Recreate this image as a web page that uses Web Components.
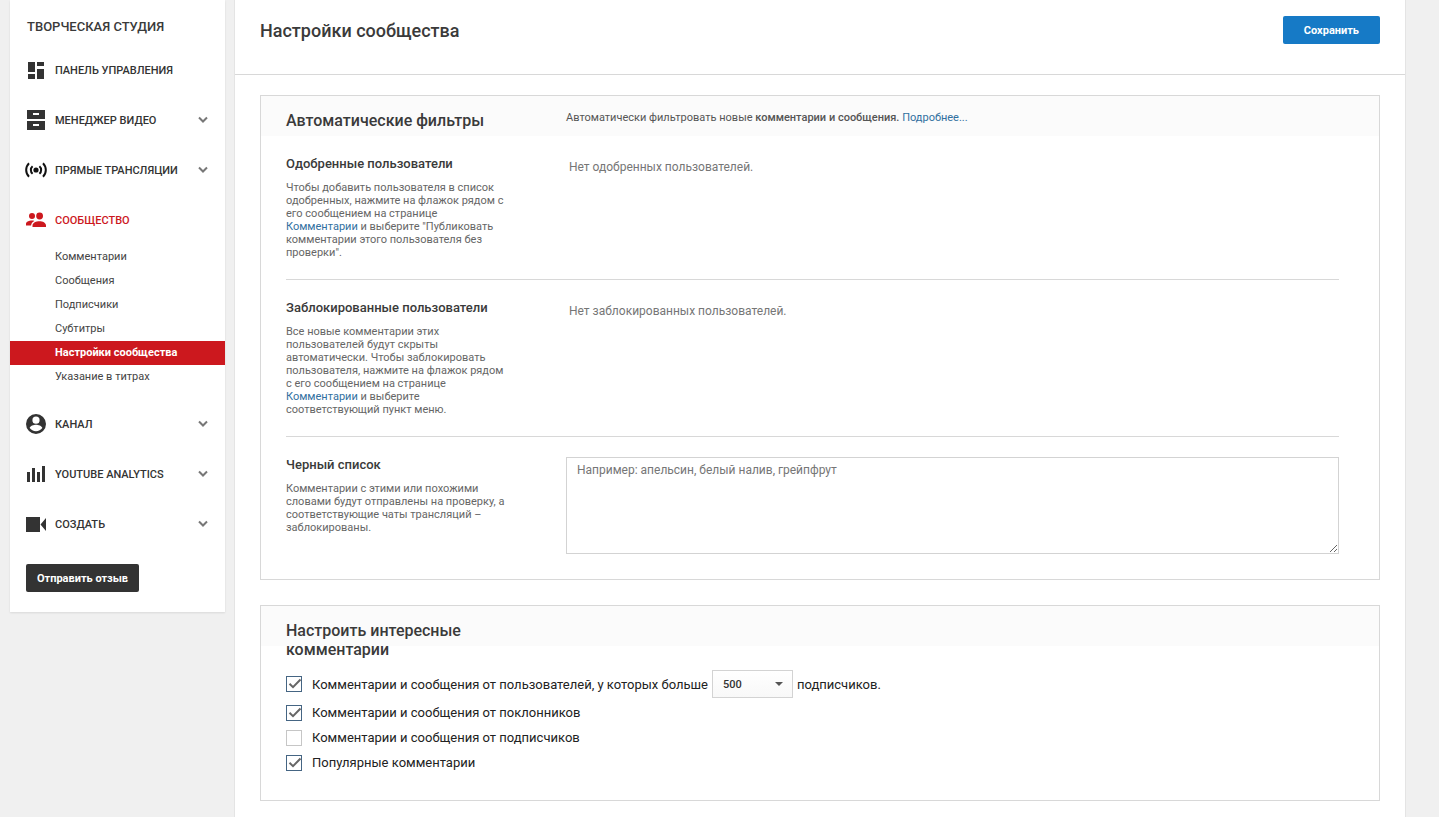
<!DOCTYPE html>
<html lang="ru">
<head>
<meta charset="utf-8">
<meta name="viewport" content="width=device-width, initial-scale=1">
<title>Настройки сообщества</title>
<style>
    body {
        margin: 0;
        background: #f0f0f0;
        color: #3a3a3a;
        font-family: Roboto, "Liberation Sans", sans-serif;
        font-size: 11px;
    }
</style>
</head>
<body>
<studio-page></studio-page>

<script>
// иконки меню, все в сетке 24x24
const ICONS = {
    dashboard: '<path d="M4 4h7v10H4zM4 16h7v5H4zM13 4h7v4h-7zM13 11h7v10h-7z"/>',
    videos: '<path fill-rule="evenodd" d="M3 2h18v9H3zM9 5v2h6V5zM3 13h18v9H3zM9 16v2h6v-2z"/>',
    live: '<g fill="none" stroke="#111" stroke-width="2"><path d="M8.6 8.2a5 5 0 0 0 0 7.6M15.4 8.2a5 5 0 0 1 0 7.6M5 5.2a9.6 9.6 0 0 0 0 13.6M19 5.2a9.6 9.6 0 0 1 0 13.6"/></g><circle cx="12" cy="12" r="2.6" fill="#111"/>',
    community: '<circle cx="8" cy="8" r="3"/><circle cx="15.600" cy="8" r="3.400"/><path d="M2 17.500v-1.500c0-2.200 3-3.400 6-3.400.9 0 1.700.1 2.500.3-2 1-3.200 2.300-3.400 4.600zM8.500 19v-1.600c0-2.700 3.600-4.200 6.900-4.200s6.600 1.500 6.600 4.200V19z"/>',
    channel: '<path fill-rule="evenodd" d="M12 2a10 10 0 1 0 0 20 10 10 0 0 0 0-20zm0 2.600a3.600 3.600 0 1 1 0 7.200 3.600 3.600 0 0 1 0-7.200zM12 19.300c-2.600 0-4.900-1.200-6.300-3.200.2-2.100 4.200-3.300 6.300-3.300s6.100 1.200 6.300 3.300c-1.400 2-3.700 3.200-6.300 3.200z"/>',
    analytics: '<path d="M3 10h3v10H3zM8 6h3v14H8zM13 10h3v10h-3zM18 4h3v16h-3z"/>',
    create: '<path d="M2 5h14v15H2zM16.500 12.500 22 6v13z"/>'
};

// пункт бокового меню
class NavItem extends HTMLElement {
    constructor() {
        super();
        this.attachShadow({mode: 'open'});
    }

    connectedCallback() {
        this.render();
    }

    render() {
        const icon = this.getAttribute('icon');
        const chevron = this.hasAttribute('expandable')
            ? '<svg class="chevron" width="10" height="8" viewBox="0 0 10 8"><path d="M1 1.500 5 5.500 9 1.500" fill="none" stroke="#777" stroke-width="2"/></svg>'
            : '';

        this.shadowRoot.innerHTML = `
            <style>
                :host {
                    display: block;
                    color: #333;
                }

                :host([active]) {
                    color: #cc181e;
                }

                a {
                    display: flex;
                    align-items: center;
                    height: 50px;
                    padding: 0 17px 0 14px;
                    color: inherit;
                    font-weight: 500;
                    text-decoration: none;
                    text-transform: uppercase;
                }

                .icon {
                    margin-right: 7px;
                    fill: currentColor;
                }

                .text {
                    flex: 1;
                    white-space: nowrap;
                }
            </style>
            <a href="#">
                <svg class="icon" width="24" height="24" viewBox="0 0 24 24">${ICONS[icon]}</svg>
                <span class="text"><slot></slot></span>
                ${chevron}
            </a>
        `;
    }
}
customElements.define('nav-item', NavItem);

// вложенный пункт меню
class NavSubitem extends HTMLElement {
    constructor() {
        super();
        this.attachShadow({mode: 'open'});
    }

    connectedCallback() {
        this.shadowRoot.innerHTML = `
            <style>
                :host {
                    display: block;
                }

                a {
                    display: block;
                    padding-left: 45px;
                    color: #444;
                    line-height: 24px;
                    text-decoration: none;
                }

                :host([selected]) a {
                    background: #cc181e;
                    color: #fff;
                    font-weight: 700;
                }
            </style>
            <a href="#"><slot></slot></a>
        `;
    }
}
customElements.define('nav-subitem', NavSubitem);

// кнопка, цвет задаётся атрибутом kind
class StudioButton extends HTMLElement {
    constructor() {
        super();
        this.attachShadow({mode: 'open'});
    }

    connectedCallback() {
        this.shadowRoot.innerHTML = `
            <style>
                :host {
                    display: inline-block;
                }

                button {
                    display: block;
                    height: 28px;
                    padding: 0 11px;
                    border: 0;
                    border-radius: 2px;
                    background: #333;
                    color: #fff;
                    font: 700 11px Roboto, "Liberation Sans", sans-serif;
                    cursor: pointer;
                }

                :host([kind="primary"]) button {
                    padding: 0 21px;
                    background: #167ac6;
                }
            </style>
            <button type="button"><slot></slot></button>
        `;
    }
}
customElements.define('studio-button', StudioButton);

class StudioSidebar extends HTMLElement {
    constructor() {
        super();
        this.attachShadow({mode: 'open'});
    }

    connectedCallback() {
        this.shadowRoot.innerHTML = `
            <style>
                :host {
                    display: block;
                    background: #fff;
                    box-shadow: 0 1px 2px rgba(0, 0, 0, .1);
                }

                .title {
                    padding: 19px 17px 10px;
                    font-size: 13px;
                    line-height: 16px;
                    font-weight: 500;
                }

                .sub {
                    padding-bottom: 10px;
                }

                .feedback {
                    padding: 15px 16px 20px;
                }
            </style>
            <nav>
                <div class="title">ТВОРЧЕСКАЯ СТУДИЯ</div>
                <nav-item icon="dashboard">Панель управления</nav-item>
                <nav-item icon="videos" expandable>Менеджер видео</nav-item>
                <nav-item icon="live" expandable>Прямые трансляции</nav-item>
                <nav-item icon="community" active>Сообщество</nav-item>
                <div class="sub">
                    <nav-subitem>Комментарии</nav-subitem>
                    <nav-subitem>Сообщения</nav-subitem>
                    <nav-subitem>Подписчики</nav-subitem>
                    <nav-subitem>Субтитры</nav-subitem>
                    <nav-subitem selected>Настройки сообщества</nav-subitem>
                    <nav-subitem>Указание в титрах</nav-subitem>
                </div>
                <nav-item icon="channel" expandable>Канал</nav-item>
                <nav-item icon="analytics" expandable>YouTube Analytics</nav-item>
                <nav-item icon="create" expandable>Создать</nav-item>
            </nav>
            <div class="feedback"><studio-button>Отправить отзыв</studio-button></div>
        `;
    }
}
customElements.define('studio-sidebar', StudioSidebar);

// рамка с заголовком
class SettingsPanel extends HTMLElement {
    constructor() {
        super();
        this.attachShadow({mode: 'open'});
    }

    connectedCallback() {
        const heading = this.getAttribute('heading');

        this.shadowRoot.innerHTML = `
            <style>
                :host {
                    display: block;
                    padding: 15px 40px 25px 25px;
                    border: 1px solid #d8d8d8;
                    background: linear-gradient(#fbfbfb 40px, #fff 40px);
                }

                header {
                    display: grid;
                    grid-template-columns: 220px 1fr;
                    column-gap: 60px;
                }

                h2 {
                    margin: 0;
                    font-size: 16px;
                    line-height: 19px;
                    font-weight: 500;
                }

                .note {
                    line-height: 13px;
                    color: #555;
                }
            </style>
            <header>
                <h2>${heading}</h2>
                <div class="note"><slot name="note"></slot></div>
            </header>
            <slot></slot>
        `;
    }
}
customElements.define('settings-panel', SettingsPanel);

// строка настроек: слева описание, справа значение
class SettingsRow extends HTMLElement {
    constructor() {
        super();
        this.attachShadow({mode: 'open'});
    }

    connectedCallback() {
        this.shadowRoot.innerHTML = `
            <style>
                :host {
                    display: grid;
                    grid-template-columns: 220px 1fr;
                    column-gap: 60px;
                    padding: 20px 0;
                    border-bottom: 1px solid #d8d8d8;
                }

                :host(:last-child) {
                    padding-bottom: 0;
                    border-bottom: 0;
                }

                .name {
                    margin-bottom: 9px;
                    font-size: 13px;
                    line-height: 16px;
                    font-weight: 500;
                }

                .about {
                    line-height: 13px;
                    color: #666;
                }
            </style>
            <div>
                <div class="name"><slot name="name"></slot></div>
                <div class="about"><slot name="about"></slot></div>
            </div>
            <slot></slot>
        `;
    }
}
customElements.define('settings-row', SettingsRow);

class CheckOption extends HTMLElement {
    constructor() {
        super();
        this.attachShadow({mode: 'open'});
    }

    connectedCallback() {
        const checked = this.hasAttribute('checked') ? 'checked' : '';

        this.shadowRoot.innerHTML = `
            <style>
                :host {
                    display: flex;
                    align-items: center;
                    gap: 4px;
                    min-height: 25px;
                    color: #222;
                    font-size: 13px;
                }

                label {
                    display: flex;
                    align-items: center;
                    gap: 10px;
                }

                .box {
                    display: grid;
                }

                .box > * {
                    grid-area: 1 / 1;
                }

                input {
                    appearance: none;
                    box-sizing: border-box;
                    width: 16px;
                    height: 16px;
                    margin: 0;
                    border: 1px solid #c6c6c6;
                    background: #fff;
                }

                input:checked {
                    border-color: #456583;
                }

                svg {
                    visibility: hidden;
                    pointer-events: none;
                }

                input:checked + svg {
                    visibility: visible;
                }
            </style>
            <label>
                <span class="box">
                    <input type="checkbox" ${checked}>
                    <svg width="16" height="16" viewBox="0 0 16 16"><path d="M3.500 7.800 7 11.200 14.500 3.500" fill="none" stroke="#666" stroke-width="2"/></svg>
                </span>
                <span><slot></slot></span>
            </label>
            <slot name="after"></slot>
        `;
    }
}
customElements.define('check-option', CheckOption);

class CommunitySettings extends HTMLElement {
    constructor() {
        super();
        this.attachShadow({mode: 'open'});
    }

    connectedCallback() {
        this.shadowRoot.innerHTML = `
            <style>
                :host {
                    display: block;
                    border: solid #e4e4e4;
                    border-width: 0 1px;
                    background: #fff;
                }

                .top {
                    display: flex;
                    align-items: flex-start;
                    justify-content: space-between;
                    padding: 16px 25px 28px;
                    border-bottom: 1px solid #d8d8d8;
                }

                h1 {
                    margin: 0;
                    font-size: 18px;
                    line-height: 30px;
                    font-weight: 500;
                }

                .panels {
                    display: grid;
                    gap: 25px;
                    padding: 20px 25px 16px;
                }

                a {
                    color: #31709f;
                    text-decoration: none;
                }

                b {
                    font-weight: 500;
                }

                .rows {
                    padding-top: 6px;
                }

                .empty {
                    padding: 4px 3px;
                    font-size: 12px;
                    line-height: 14px;
                    color: #767676;
                }

                textarea {
                    display: block;
                    box-sizing: border-box;
                    width: 100%;
                    height: 97px;
                    padding: 5px 10px;
                    border: 1px solid #d3d3d3;
                    font: 12px/14px Roboto, "Liberation Sans", sans-serif;
                }

                textarea::placeholder {
                    color: #767676;
                }

                .checks {
                    padding-top: 9px;
                }

                .after {
                    display: flex;
                    align-items: center;
                    gap: 4px;
                    padding: 2px 0;
                }

                .select {
                    display: grid;
                    align-items: center;
                }

                .select > * {
                    grid-area: 1 / 1;
                }

                .select svg {
                    justify-self: end;
                    margin-right: 10px;
                    pointer-events: none;
                }

                select {
                    appearance: none;
                    width: 81px;
                    height: 28px;
                    padding: 0 10px;
                    border: 1px solid #d3d3d3;
                    border-radius: 0;
                    background: linear-gradient(#fff, #f8f8f8);
                    color: #333;
                    font: 500 11px Roboto, "Liberation Sans", sans-serif;
                }
            </style>
            <div class="top">
                <h1>Настройки сообщества</h1>
                <studio-button kind="primary">Сохранить</studio-button>
            </div>
            <div class="panels">
                <settings-panel heading="Автоматические фильтры">
                    <span slot="note">Автоматически фильтровать новые <b>комментарии и сообщения.</b> <a href="#">Подробнее...</a></span>
                    <div class="rows">
                        <settings-row>
                            <span slot="name">Одобренные пользователи</span>
                            <span slot="about">Чтобы добавить пользователя в список одобренных, нажмите на флажок рядом с его сообщением на странице <a href="#">Комментарии</a> и выберите "Публиковать комментарии этого пользователя без проверки".</span>
                            <div class="empty">Нет одобренных пользователей.</div>
                        </settings-row>
                        <settings-row>
                            <span slot="name">Заблокированные пользователи</span>
                            <span slot="about">Все новые комментарии этих пользователей будут скрыты автоматически. Чтобы заблокировать пользователя, нажмите на флажок рядом с его сообщением на странице <a href="#">Комментарии</a> и выберите соответствующий пункт меню.</span>
                            <div class="empty">Нет заблокированных пользователей.</div>
                        </settings-row>
                        <settings-row>
                            <label slot="name" for="blacklist">Черный список</label>
                            <span slot="about">Комментарии с этими или похожими словами будут отправлены на проверку, а соответствующие чаты трансляций – заблокированы.</span>
                            <textarea id="blacklist" placeholder="Например: апельсин, белый налив, грейпфрут"></textarea>
                        </settings-row>
                    </div>
                </settings-panel>
                <settings-panel heading="Настроить интересные комментарии">
                    <div class="checks">
                        <check-option checked>
                            Комментарии и сообщения от пользователей, у которых больше
                            <div slot="after" class="after">
                                <div class="select">
                                    <select id="count" aria-labelledby="count-unit">
                                        <option>100</option>
                                        <option selected>500</option>
                                        <option>1000</option>
                                    </select>
                                    <svg width="8" height="4" viewBox="0 0 8 4"><path d="M0 0h8L4 4z" fill="#555"/></svg>
                                </div>
                                <label id="count-unit" for="count">подписчиков.</label>
                            </div>
                        </check-option>
                        <check-option checked>Комментарии и сообщения от поклонников</check-option>
                        <check-option>Комментарии и сообщения от подписчиков</check-option>
                        <check-option checked>Популярные комментарии</check-option>
                    </div>
                </settings-panel>
            </div>
        `;
    }
}
customElements.define('community-settings', CommunitySettings);

class StudioPage extends HTMLElement {
    constructor() {
        super();
        this.attachShadow({mode: 'open'});
    }

    connectedCallback() {
        this.shadowRoot.innerHTML = `
            <style>
                :host {
                    display: flex;
                    gap: 9px;
                    min-height: 100vh;
                    padding: 0 33px 0 10px;
                }

                studio-sidebar {
                    flex: 0 0 215px;
                    align-self: flex-start;
                }

                community-settings {
                    flex: 1;
                    min-width: 0;
                }
            </style>
            <studio-sidebar></studio-sidebar>
            <community-settings></community-settings>
        `;
    }
}
customElements.define('studio-page', StudioPage);
</script>
</body>
</html>
